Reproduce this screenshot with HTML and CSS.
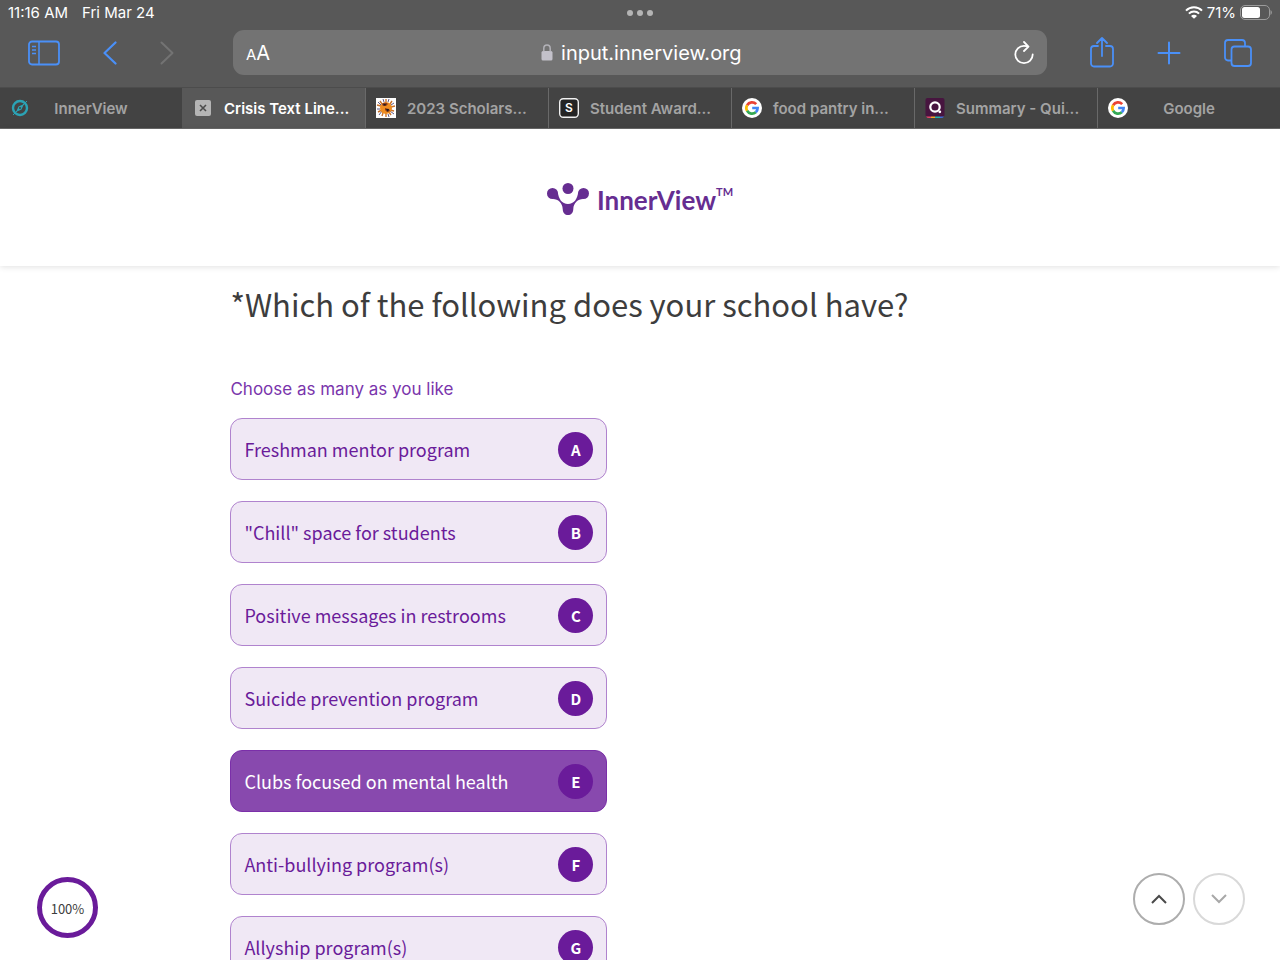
FILE: index.html
```html
<!DOCTYPE html>
<html lang="en">
<head>
    <meta charset="UTF-8">
    <meta name="viewport" content="width=device-width, initial-scale=1.0">
    <title>InnerView</title>
    <link rel="stylesheet" href="styles.css">
</head>
<body>
    <div class="browser">
        <div class="status">
            <div class="status-side">
                <span>11:16 AM</span>
                <span>Fri Mar 24</span>
            </div>
            <div class="dots"><i></i><i></i><i></i></div>
            <div class="status-side right">
                <svg width="18" height="13" viewBox="0 0 18 13" fill="none" stroke="#fff" stroke-width="2">
                    <path d="M1 4.6a11.3 11.3 0 0 1 16 0M3.9 7.6a7.2 7.2 0 0 1 10.2 0"/>
                    <path d="M6 9.9a4.2 4.2 0 0 1 6 0L9 12.8z" fill="#fff" stroke="none"/>
                </svg>
                <span>71%</span>
                <svg width="32" height="15" viewBox="0 0 32 15">
                    <rect x="0.5" y="0.5" width="29" height="14" rx="4.5" fill="none" stroke="#9b9b9b"/>
                    <rect x="2" y="2" width="18" height="11" rx="2.5" fill="#fff"/>
                    <path d="M30.5 5v5c1.800-.7 1.800-4.300 0-5z" fill="#9b9b9b"/>
                </svg>
            </div>
        </div>

        <div class="toolbar">
            <div class="tools">
                <button aria-label="Sidebar">
                    <svg width="32" height="26" viewBox="0 0 32 26" fill="none" stroke="#4a90f8" stroke-width="1.8">
                        <rect x="1" y="1.5" width="30" height="23" rx="3"/>
                        <path d="M11 1.5v23M4 6.5h4M4 10h4M4 13.5h4" stroke-width="1.5"/>
                    </svg>
                </button>
                <button aria-label="Back">
                    <svg width="14" height="24" viewBox="0 0 14 24" fill="none" stroke="#4a90f8" stroke-width="2.2" stroke-linecap="round" stroke-linejoin="round">
                        <path d="M12.5 1.5L1.5 12l11 10.500"/>
                    </svg>
                </button>
                <button aria-label="Forward">
                    <svg width="14" height="24" viewBox="0 0 14 24" fill="none" stroke="#737373" stroke-width="2" stroke-linecap="round" stroke-linejoin="round">
                        <path d="M1.5 1.5L12.5 12l-11 10.500"/>
                    </svg>
                </button>
            </div>
            <div class="address">
                <button class="text-size" aria-label="Text size"><small>A</small>A</button>
                <div class="url">
                    <svg width="12" height="17" viewBox="0 0 12 17">
                        <rect x="0.5" y="7" width="11" height="9.5" rx="1.5" fill="#c3c1ca"/>
                        <path d="M2.800 7.500V4.500a3.200 3.400 0 0 1 6.400 0v3" fill="none" stroke="#b3b2b8" stroke-width="1.5"/>
                    </svg>
                    <input type="text" value="input.innerview.org" aria-label="Address">
                </div>
                <button aria-label="Reload">
                    <svg width="20" height="24" viewBox="0 0 20 24" fill="none" stroke="#fff" stroke-width="1.8" stroke-linecap="round" stroke-linejoin="round">
                        <path d="M18.700 13.500a8.700 8.700 0 1 1-8.700-8.700q2 0 4.500.8M10 1l4.500 4.600-4.500 4.400"/>
                    </svg>
                </button>
            </div>
            <div class="tools right">
                <button aria-label="Share">
                    <svg width="24" height="32" viewBox="0 0 24 32" fill="none" stroke="#4a90f8" stroke-width="1.8" stroke-linecap="round" stroke-linejoin="round">
                        <path d="M8 9H4a3 3 0 0 0-3 3v14.500a3 3 0 0 0 3 3h16a3 3 0 0 0 3-3V12a3 3 0 0 0-3-3h-4M12 19V1M7 6l5-5 5 5"/>
                    </svg>
                </button>
                <button aria-label="New tab">
                    <svg width="24" height="24" viewBox="0 0 24 24" fill="none" stroke="#4a90f8" stroke-width="2" stroke-linecap="round">
                        <path d="M12 1.500v21M1.500 12h21"/>
                    </svg>
                </button>
                <button aria-label="Show tabs">
                    <svg width="28" height="28" viewBox="0 0 28 28" fill="none" stroke="#4a90f8" stroke-width="1.8">
                        <rect x="7.500" y="7.500" width="19.500" height="19.500" rx="3"/>
                        <path d="M7.500 21.500H4a3 3 0 0 1-3-3V4a3 3 0 0 1 3-3h14a3 3 0 0 1 3 3v3.500"/>
                    </svg>
                </button>
            </div>
        </div>

        <div class="tabs">
            <button class="tab">
                <svg width="20" height="20" viewBox="0 0 20 20" fill="none" stroke="#2ba3b5">
                    <circle cx="10" cy="10" r="7" stroke-width="2.4"/>
                    <path d="M3 17L17 3" stroke-width="1"/>
                    <path d="M6 14l2.500-5.500L14 6l-2.500 5.500z" fill="#2ba3b5" stroke="none"/>
                    <circle cx="10" cy="10" r="1" fill="#434343" stroke="none"/>
                </svg>
                <span>InnerView</span>
            </button>
            <button class="tab current">
                <svg width="20" height="20" viewBox="0 0 20 20">
                    <rect x="2" y="2" width="16" height="16" rx="2" fill="#b5b5b5"/>
                    <path d="M7 7l6 6M13 7l-6 6" stroke="#4c4c4c" stroke-width="1.6"/>
                </svg>
                <span>Crisis Text Line...</span>
            </button>
            <button class="tab">
                <svg width="20" height="20" viewBox="0 0 20 20">
                    <rect width="20" height="20" fill="#fff"/>
                    <path d="M10 1v3M4 3l2 3M16 3l-2 3M1 7l4 1M19 8l-4 1M2 14l4-2M18 13l-4-1M6 18l1-3M10 19v-4M15 17l-2-3" stroke="#c9722c" stroke-width="1.4"/>
                    <path d="M7 1l1 3M13 1l-1 3M2 4l3 3M18 5l-3 2M1 11h3M3 17l3-4M13 19l-1-3M18 16l-4-3" stroke="#5f5a86" stroke-width="1"/>
                    <circle cx="10" cy="10" r="6" fill="#ee8c20"/>
                    <path d="M6 6c2-2 5-1 6 0l-2 2-3 0zM9 10l4 1 1 2-3 1-2-2z" fill="#8a3b1c"/>
                    <path d="M7 6l3 0-1 2zM10 11l3 0-1 3z" fill="#1e1b1b"/>
                </svg>
                <span>2023 Scholars...</span>
            </button>
            <button class="tab">
                <svg width="20" height="20" viewBox="0 0 20 20">
                    <rect x="0.700" y="0.700" width="18.600" height="18.600" rx="3.500" fill="#242424" stroke="#f1f1f1" stroke-width="1.4"/>
                    <text x="10" y="14" class="fav-letter">S</text>
                </svg>
                <span>Student Award...</span>
            </button>
            <button class="tab">
                <svg width="20" height="20" viewBox="0 0 20 20">
                    <circle cx="10" cy="10" r="10" fill="#fff"/>
                    <g fill="none" stroke-width="2.7">
                        <path d="M14.200 6.200A5.700 5.700 0 0 0 5.100 7.200" stroke="#ea4335"/>
                        <path d="M5.100 7.200a5.700 5.700 0 0 0 0 5.600" stroke="#fbbc05"/>
                        <path d="M5.100 12.800a5.700 5.700 0 0 0 8.700 1.400" stroke="#34a853"/>
                        <path d="M13.800 14.200a5.700 5.700 0 0 0 1.800-4.200H10.200" stroke="#4285f4"/>
                    </g>
                </svg>
                <span>food pantry in...</span>
            </button>
            <button class="tab">
                <svg width="20" height="20" viewBox="0 0 20 20">
                    <rect x="0.500" width="19" height="19" rx="2" fill="#47153f"/>
                    <path d="M1 18.500q1 1.500 3 1.500h2v-1.500z" fill="#e8456b"/>
                    <path d="M6 18.500h4V20H6z" fill="#f5a623"/>
                    <path d="M10 18.500h5V20h-5z" fill="#1fb5ad"/>
                    <path d="M15 18.500h4q-1 1.500-2.500 1.500H15z" fill="#3f6fd8"/>
                    <circle cx="10" cy="9" r="4.700" fill="none" stroke="#fff" stroke-width="2.2"/>
                    <circle cx="14.800" cy="13.800" r="1.400" fill="#fff"/>
                </svg>
                <span>Summary - Qui...</span>
            </button>
            <button class="tab">
                <svg width="20" height="20" viewBox="0 0 20 20">
                    <circle cx="10" cy="10" r="10" fill="#fff"/>
                    <g fill="none" stroke-width="2.7">
                        <path d="M14.200 6.200A5.700 5.700 0 0 0 5.100 7.200" stroke="#ea4335"/>
                        <path d="M5.100 7.200a5.700 5.700 0 0 0 0 5.600" stroke="#fbbc05"/>
                        <path d="M5.100 12.800a5.700 5.700 0 0 0 8.700 1.400" stroke="#34a853"/>
                        <path d="M13.800 14.200a5.700 5.700 0 0 0 1.800-4.200H10.200" stroke="#4285f4"/>
                    </g>
                </svg>
                <span>Google</span>
            </button>
        </div>
    </div>

    <header class="site-header">
        <div class="logo">
            <svg width="42" height="32" viewBox="0 0 42 32" fill="#662d91">
                <circle cx="21" cy="5.500" r="5.500"/>
                <circle cx="5.500" cy="10.500" r="5.500"/>
                <circle cx="36.500" cy="10.500" r="5.500"/>
                <path d="M10.800 9C11.500 16 15 21 21 21S30.500 16 31.200 9L36 16C31 16 26.500 20 26.300 26c-.2 4-2.300 6-5.300 6s-5.100-2-5.300-6C15.500 20 11 16 6 16z"/>
            </svg>
            <span class="logo-name">InnerView</span><span class="logo-tm">TM</span>
        </div>
    </header>

    <main class="content">
        <h1>*Which of the following does your school have?</h1>
        <fieldset class="options">
            <legend>Choose as many as you like</legend>
            <label class="option"><input type="checkbox"><span>Freshman mentor program</span><b>A</b></label>
            <label class="option"><input type="checkbox"><span>"Chill" space for students</span><b>B</b></label>
            <label class="option"><input type="checkbox"><span>Positive messages in restrooms</span><b>C</b></label>
            <label class="option"><input type="checkbox"><span>Suicide prevention program</span><b>D</b></label>
            <label class="option"><input type="checkbox" checked><span>Clubs focused on mental health</span><b>E</b></label>
            <label class="option"><input type="checkbox"><span>Anti-bullying program(s)</span><b>F</b></label>
            <label class="option"><input type="checkbox"><span>Allyship program(s)</span><b>G</b></label>
        </fieldset>
    </main>

    <div class="progress">100%</div>
    <div class="pager">
        <button aria-label="Previous question">
            <svg width="16" height="10" viewBox="0 0 16 10" fill="none" stroke="#4a4a4a" stroke-width="2"><path d="M1 9l7-7 7 7"/></svg>
        </button>
        <button aria-label="Next question" class="faded">
            <svg width="16" height="10" viewBox="0 0 16 10" fill="none" stroke="#a8a8a8" stroke-width="2"><path d="M1 1l7 7 7-7"/></svg>
        </button>
    </div>
</body>
</html>
```
FILE: styles.css
```css
* {
    box-sizing: border-box;
}
body {
    margin: 0;
    height: 100vh;
    display: flex;
    flex-direction: column;
    overflow: hidden;
    background-color: #fff;
    font-family: "Noto Sans CJK JP", "Noto Sans", sans-serif;
}
button {
    display: flex;
    align-items: center;
    justify-content: center;
    padding: 0;
    border: none;
    background: none;
    color: inherit;
    font-family: inherit;
    cursor: pointer;
}
svg {
    display: block;
    flex: none;
}

/* Browser bars */
.browser {
    flex: none;
    background-color: #585858;
    color: #fff;
    font-family: Inter, "Liberation Sans", sans-serif;
}
.status {
    display: flex;
    align-items: center;
    height: 25px;
    padding: 0 8px;
    font-size: 15px;
}
.status-side {
    flex: 1;
    display: flex;
    gap: 14px;
}
.status-side.right {
    justify-content: flex-end;
    align-items: center;
    gap: 4px;
}
.dots {
    display: flex;
    gap: 4px;
}
.dots i {
    width: 6px;
    height: 6px;
    border-radius: 50%;
    background-color: #b4b4b4;
}
.toolbar {
    display: flex;
    align-items: center;
    height: 62px;
    padding-bottom: 7px;
}
.tools {
    width: 233px;
    padding: 0 28px;
    display: flex;
    align-items: center;
    gap: 43px;
}
.tools.right {
    justify-content: flex-end;
}
.address {
    flex: 1;
    display: flex;
    align-items: center;
    justify-content: space-between;
    height: 45px;
    padding: 0 13px;
    border-radius: 11px;
    background-color: #737373;
}
.text-size {
    align-items: baseline;
    font-size: 20px;
}
.text-size small {
    font-size: 15px;
}
.url {
    display: flex;
    align-items: center;
    gap: 8px;
}
.url input {
    width: 182px;
    padding: 0;
    border: none;
    outline: none;
    background: none;
    color: #fff;
    font-family: inherit;
    font-size: 20px;
}
.tabs {
    display: flex;
    height: 42px;
    border-top: 1px solid #4c4c4c;
    border-bottom: 1px solid #6a6a6a;
}
.tab {
    flex: 1;
    display: grid;
    grid-template-columns: minmax(31px, 1fr) auto minmax(0, 1fr);
    min-width: 0;
    padding: 0 10px;
    background-color: #434343;
    color: #a3a3a3;
    font-size: 15px;
    font-weight: 600;
    white-space: nowrap;
}
.tab + .tab {
    border-left: 1px solid #696969;
}
.tab.current {
    background-color: #585858;
    border-color: #585858;
    color: #fff;
}
.fav-letter {
    fill: #fff;
    font-family: Inter, sans-serif;
    font-size: 12px;
    font-weight: 600;
    text-anchor: middle;
}

/* Page header */
.site-header {
    flex: none;
    display: flex;
    justify-content: center;
    padding: 54px 20px 51px;
    box-shadow: 0 1px 6px rgba(0,0,0,0.12);
}
.logo {
    display: flex;
    height: 32px;
    color: #662d91;
    font-family: Lato, sans-serif;
    font-weight: bold;
}
.logo-name {
    margin-left: 8px;
    font-size: 26px;
    line-height: 34px;
}
.logo-tm {
    font-size: 11px;
    line-height: 18px;
}

/* Question */
.content {
    flex: 1;
    min-height: 0;
    width: 64%;
    margin: 0 auto;
    overflow: hidden;
}
h1 {
    margin: 14px 0 48px;
    color: #3d3d3d;
    font-size: 31px;
    font-weight: normal;
    line-height: 48px;
}
.options {
    display: flex;
    flex-direction: column;
    gap: 21px;
    width: 377px;
    margin: 0;
    padding: 0;
    border: none;
}
legend {
    margin-bottom: 16px;
    padding: 0;
    color: #7a35ac;
    font-family: Inter, "Liberation Sans", sans-serif;
    font-size: 17px;
    line-height: 26px;
}
.option {
    display: flex;
    align-items: center;
    justify-content: space-between;
    height: 62px;
    padding: 0 13px;
    border: 1px solid #b083ce;
    border-radius: 12px;
    background-color: #f0e8f5;
    color: #6a1b9a;
    font-size: 18px;
    cursor: pointer;
}
.option input {
    position: absolute;
    opacity: 0;
}
.option b {
    width: 35px;
    height: 35px;
    border-radius: 50%;
    background-color: #6a1b9a;
    color: #fff;
    font-size: 15px;
    line-height: 35px;
    text-align: center;
}
.option:has(input:checked) {
    border-color: #7b2fa9;
    background-color: #8849ae;
    color: #fff;
}

/* Floating controls */
.progress {
    position: fixed;
    left: 37px;
    bottom: 22px;
    width: 61px;
    height: 61px;
    border: 5px solid #6a1b9a;
    border-radius: 50%;
    background-color: #fff;
    color: #3d3d3d;
    font-size: 13px;
    line-height: 53px;
    text-align: center;
}
.pager {
    position: fixed;
    right: 35px;
    bottom: 35px;
    display: flex;
    gap: 8px;
}
.pager button {
    width: 52px;
    height: 52px;
    border: 2px solid #adadad;
    border-radius: 50%;
    background-color: #fff;
}
.pager .faded {
    border-color: #d9d9d9;
}
```
